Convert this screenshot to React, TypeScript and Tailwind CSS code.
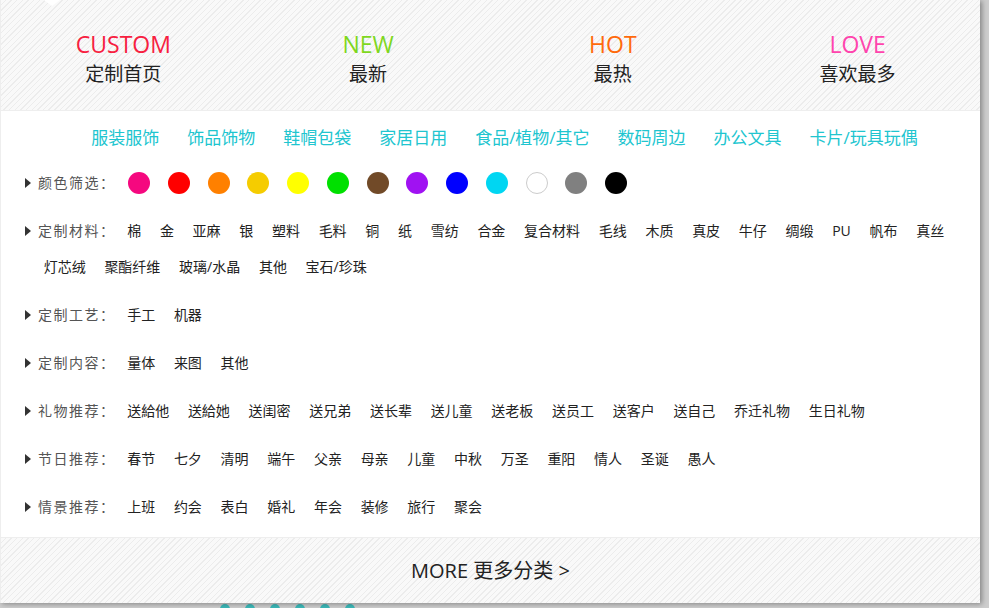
import React from "react";

const FONT = { fontFamily: '"Open Sans","Noto Sans CJK SC",sans-serif' };

const heads = [
  { en: "CUSTOM", zh: "定制首页", c: "text-[#f7203f]" },
  { en: "NEW", zh: "最新", c: "text-[#7ed71e]" },
  { en: "HOT", zh: "最热", c: "text-[#ff6a0c]" },
  { en: "LOVE", zh: "喜欢最多", c: "text-[#ff44ad]" },
];

const navs = ["服装服饰", "饰品饰物", "鞋帽包袋", "家居日用", "食品/植物/其它", "数码周边", "办公文具", "卡片/玩具玩偶"];

const dots = [
  "bg-[#f5087f]",
  "bg-[#ff0000]",
  "bg-[#ff8000]",
  "bg-[#f5cc00]",
  "bg-[#ffff00]",
  "bg-[#00e000]",
  "bg-[#714a28]",
  "bg-[#a012f2]",
  "bg-[#0000ff]",
  "bg-[#00d6f2]",
  "bg-white border border-[#cccccc]",
  "bg-[#808080]",
  "bg-black",
];

const rows: { label: string; items: string[] }[] = [
  {
    label: "定制材料：",
    items: ["棉", "金", "亚麻", "银", "塑料", "毛料", "铜", "纸", "雪纺", "合金", "复合材料", "毛线", "木质", "真皮", "牛仔", "绸缎", "PU", "帆布", "真丝", "灯芯绒", "聚酯纤维", "玻璃/水晶", "其他", "宝石/珍珠"],
  },
  { label: "定制工艺：", items: ["手工", "机器"] },
  { label: "定制内容：", items: ["量体", "来图", "其他"] },
  {
    label: "礼物推荐：",
    items: ["送給他", "送給她", "送闺密", "送兄弟", "送长辈", "送儿童", "送老板", "送员工", "送客户", "送自己", "乔迁礼物", "生日礼物"],
  },
  {
    label: "节日推荐：",
    items: ["春节", "七夕", "清明", "端午", "父亲", "母亲", "儿童", "中秋", "万圣", "重阳", "情人", "圣诞", "愚人"],
  },
  { label: "情景推荐：", items: ["上班", "约会", "表白", "婚礼", "年会", "装修", "旅行", "聚会"] },
];

function Label({ text }: { text: string }) {
  return (
    <div className="w-[83.5px] flex items-center h-[36px] shrink-0">
      <span className="w-0 h-0 border-y-[5px] border-y-transparent border-l-[6px] border-l-[#333333] mr-[7px]" />
      <span className="text-[14px] text-[#555555] tracking-[1.5px] leading-[36px] whitespace-nowrap">{text}</span>
    </div>
  );
}

const stripes =
  "bg-[repeating-linear-gradient(135deg,#f9f9f9_0px,#f9f9f9_3px,#ececec_3px,#ececec_4px)]";

export default function App() {
  return (
    <div className="w-[989px] h-[608px] overflow-hidden bg-[#cdcdcd] relative" style={FONT}>
      <div className="w-[980px] bg-white shadow-[2px_1px_5px_rgba(0,0,0,0.35)] relative border-l border-[#eeeeee]">
        {/* pointer notch */}
        <div className="absolute left-[43px] top-0 w-0 h-0 border-x-[8px] border-x-transparent border-t-[6px] border-t-white z-10" />
        {/* header */}
        <div className={`h-[111px] border-b border-[#eeeeee] flex ${stripes}`}>
          {heads.map((h) => (
            <div key={h.en} className="flex-1 flex flex-col items-center pt-[29px]">
              <div className={`text-[23px] leading-[30px] ${h.c}`}>{h.en}</div>
              <div className="text-[19px] leading-[30px] text-[#222222]">{h.zh}</div>
            </div>
          ))}
        </div>
        {/* nav */}
        <div className="h-[54px] flex justify-center items-center">
          {navs.map((n) => (
            <span key={n} className="ml-[28px] text-[17px] leading-[24px] text-[#20c5cf] whitespace-nowrap">
              {n}
            </span>
          ))}
        </div>
        {/* colors */}
        <div className="flex items-center pl-[24px] h-[36px]">
          <Label text="颜色筛选：" />
          {dots.map((d, i) => (
            <span key={i} className={`${i === 0 ? "ml-[19.5px]" : "ml-[17.75px]"} w-[22px] h-[22px] rounded-full box-border shrink-0 ${d}`} />
          ))}
        </div>
        {rows.map((r) => (
          <div key={r.label} className="flex flex-wrap pl-[24px] pr-[20px] mt-[12px]">
            <Label text={r.label} />
            {r.items.map((it) => (
              <span key={it} className="ml-[18.7px] text-[14px] leading-[36px] text-[#222222] whitespace-nowrap">
                {it}
              </span>
            ))}
          </div>
        ))}
        <div className="h-[12px]" />
        {/* footer */}
        <div className={`h-[66px] border-t border-[#eeeeee] flex items-center justify-center ${stripes}`}>
          <span className="text-[20px] leading-[28px] text-[#222222]">MORE 更多分类 &gt;</span>
        </div>
      </div>
      <div className="flex ml-[220px] mt-[1px] gap-[15px]">
        {[0, 1, 2, 3, 4, 5].map((i) => (
          <span key={i} className="w-[10px] h-[10px] rounded-full bg-[#3cb8b8]" />
        ))}
      </div>
    </div>
  );
}
